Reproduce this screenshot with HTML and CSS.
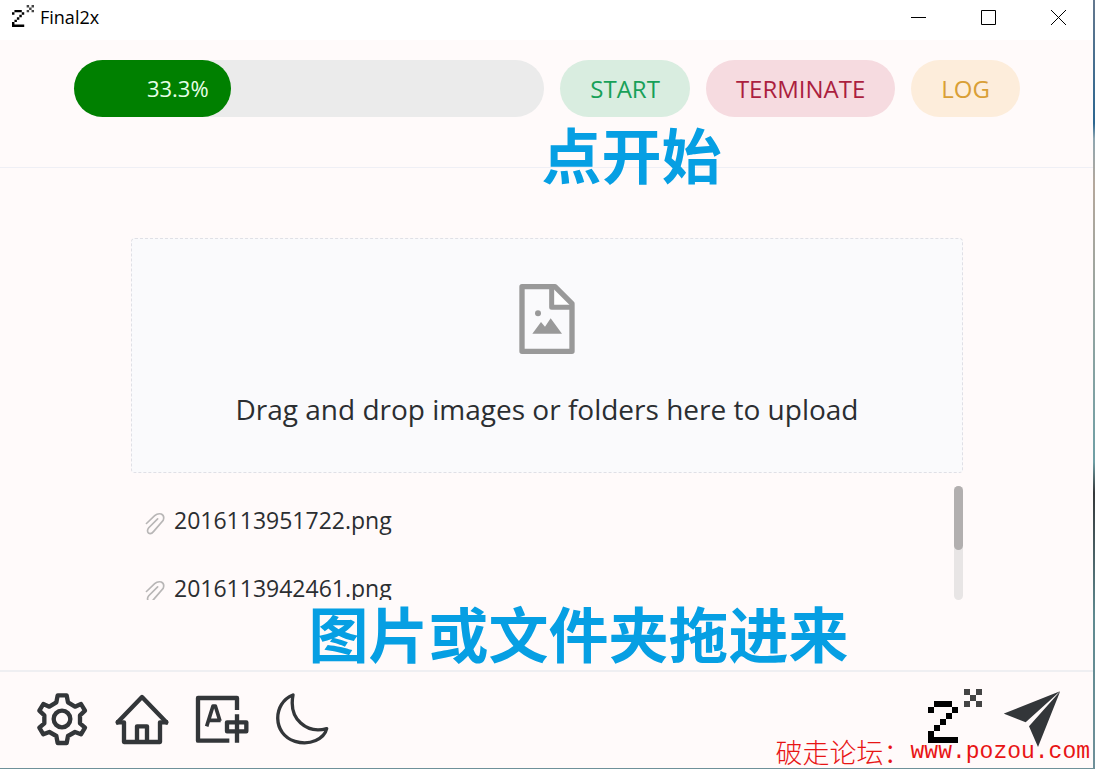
FILE: index.html
```html
<!DOCTYPE html>
<html lang="en">
<head>
  <meta charset="UTF-8" />
  <meta name="viewport" content="width=device-width, initial-scale=1" />
  <title>Final2x</title>
  <link rel="stylesheet" href="styles.css">
</head>
<body>

  <!-- pixel logo, used in the title bar and the footer -->
  <svg class="defs" width="0" height="0" aria-hidden="true">
    <symbol id="logo" viewBox="0 0 9 9">
      <path fill="#000" d="M1 2h3v1h-3zM0 3h1v1h-1zM4 3h1v1h-1zM3 4h1v1h-1zM2 5h1v1h-1zM1 6h1v1h-1zM0 7h1v1h4v1h-5z" />
      <path fill="#444" d="M6 0h1v1h-1zM8 0h1v1h-1zM7 1h1v1h-1zM6 2h1v1h-1zM8 2h1v1h-1z" />
    </symbol>
    <symbol id="clip" viewBox="75 155 60 70">
      <path fill="none" stroke="#b8b6b6" stroke-width="5" stroke-linecap="round" d="M79 190L104 166Q113 158 124 161Q135 166 130 180L101 214Q93 224 85 219Q79 212 86 203L113 176" />
    </symbol>
  </svg>

  <div class="window">
    <div class="titlebar">
      <svg class="title-logo"><use href="#logo" /></svg>
      <span class="title">Final2x</span>
      <div class="controls">
        <button aria-label="Minimize"><svg viewBox="0 0 15 15"><path d="M0 7.5H15" /></svg></button>
        <button aria-label="Maximize"><svg viewBox="0 0 15 15"><path d="M.5 .5H14.5V14.5H.5Z" /></svg></button>
        <button aria-label="Close"><svg viewBox="0 0 15 15"><path d="M0 0L15 15M15 0L0 15" /></svg></button>
      </div>
    </div>

    <header>
      <div class="progress" role="progressbar" aria-valuenow="33.3" aria-valuemin="0" aria-valuemax="100">
        <div class="progress-fill" style="width: 33.3%">33.3%</div>
      </div>
      <button class="pill start">START</button>
      <button class="pill terminate">TERMINATE</button>
      <button class="pill log">LOG</button>
      <div class="note note-start" lang="zh-CN">点开始</div>
    </header>

    <main>
      <button class="dropzone">
        <svg class="file-icon" viewBox="177 162 168 210">
          <path fill="#fff" d="M275 170H287L336 221V232H275Z" />
          <path fill="none" stroke="#999" stroke-width="16" stroke-linejoin="round" d="M186 170H285L336 221V364H186Z" />
          <path fill="none" stroke="#999" stroke-width="15" stroke-linejoin="round" d="M275 170V232H336" />
          <circle cx="234" cy="250" r="9" fill="#999" />
          <path fill="#999" d="M217 311L243 276L255 290L272 265L306 311Z" />
        </svg>
        <span>Drag and drop images or folders here to upload</span>
      </button>

      <div class="files">
        <ul>
          <li><svg><use href="#clip" /></svg>2016113951722.png</li>
          <li><svg><use href="#clip" /></svg>2016113942461.png</li>
        </ul>
        <div class="scrollbar"><div class="thumb"></div></div>
      </div>
      <div class="note note-drop" lang="zh-CN">图片或文件夹拖进来</div>
    </main>

    <footer>
      <button class="tool" aria-label="Settings">
        <svg viewBox="44 62 162 162">
          <path d="M112 72H139L143 93L164 106L182 98L194 118L179 132V156L194 169L182 189L164 182L143 194L139 215H112L108 194L87 182L69 189L57 169L72 156V132L57 118L69 98L87 106L108 93Z" />
          <circle cx="125" cy="143" r="25" />
        </svg>
      </button>
      <button class="tool" aria-label="Home">
        <svg viewBox="285 62 162 162">
          <path d="M293 153L366 77L439 153" stroke-linecap="round" />
          <path d="M288 153H312V212H420V153H444" />
          <path d="M351 212V165H381V212" />
        </svg>
      </button>
      <button class="tool" aria-label="Language">
        <svg viewBox="45 62 162 162">
          <path d="M171 116V80H54V208H148" />
          <path stroke-width="11" d="M80 165L99 104H106L120 149M86 147H122" />
          <path stroke-width="13" d="M141 153H199V180H141ZM171 129V214" />
        </svg>
      </button>
      <button class="tool" aria-label="Dark mode">
        <svg viewBox="284 62 162 162">
          <path stroke-width="10" d="M338 71C276 95 276 190 344 210C390 224 432 202 439 172C380 188 324 145 338 71Z" />
        </svg>
      </button>
      <svg class="footer-logo"><use href="#logo" /></svg>
      <button class="send" aria-label="Send">
        <svg viewBox="311 60 168 168">
          <path d="M310 128L480 60L376 154ZM480 60L413 228L386 166Z" />
        </svg>
      </button>
    </footer>
  </div>

  <div class="watermark" lang="zh-CN">破走论坛：<span>www.pozou.com</span></div>

</body>
</html>
```
FILE: styles.css
```css
* {
  box-sizing: border-box;
}

body {
  margin: 0;
  padding: 0 2px 2px 0;
  min-height: 100vh;
  display: flex;
  position: relative;
  font-family: "Open Sans", "Noto Sans CJK SC", sans-serif;
  color: #2b2e31;
  background: linear-gradient(#64788e, #2c6690 16%, #8fa6b0 18%, #b5a89c 24%, #6f9fa5 60%, #35383a 64%, #5f8a90 80%, #6f9099);
}

.defs {
  position: absolute;
}

button {
  font: inherit;
  color: inherit;
  border: none;
  background: none;
  padding: 0;
  cursor: pointer;
}

svg {
  display: block;
}

.window {
  flex: 1;
  display: flex;
  flex-direction: column;
  background: #fffafa;
}

.titlebar {
  height: 40px;
  display: flex;
  align-items: flex-start;
  padding: 5px 20px 5px 12px;
  background: #fff;
}

.title-logo {
  width: 22px;
  height: 22px;
}

.title {
  margin-left: 6px;
  font-size: 18px;
  line-height: 24px;
  color: #000;
}

.controls {
  margin-left: auto;
  display: flex;
  gap: 40px;
}

.controls button {
  width: 30px;
  height: 24px;
  display: grid;
  place-items: center;
}

.controls svg {
  width: 15px;
  height: 15px;
  fill: none;
  stroke: #000;
}

header {
  position: relative;
  display: flex;
  gap: 16px;
  padding: 20px 73px 50px 74px;
  border-bottom: 1px solid #efeff5;
}

.progress {
  flex: 1;
  height: 57px;
  border-radius: 29px;
  background: #ebebeb;
}

.progress-fill {
  height: 57px;
  padding-right: 22px;
  border-radius: 29px;
  background: #008000;
  color: #e6ffe6;
  font-size: 22px;
  line-height: 56px;
  text-align: right;
}

.pill {
  height: 57px;
  padding: 0 30px;
  border-radius: 29px;
  font-size: 24px;
  line-height: 56px;
}

.start {
  background: #d9ede0;
  color: #18a058;
}

.terminate {
  background: #f6dbe0;
  color: #ab1f3f;
}

.log {
  background: #fdeddb;
  color: #d99f36;
}

.note {
  position: absolute;
  font-family: "Noto Sans CJK SC", sans-serif;
  font-weight: 700;
  font-size: 60px;
  line-height: 60px;
  white-space: nowrap;
  color: #069fe3;
}

.note-start {
  left: calc(50% - 5px);
  top: 83px;
}

.note-drop {
  left: calc(50% - 238px);
  bottom: 8px;
}

main {
  position: relative;
  flex: 1;
  padding: 70px 130px 70px 131px;
}

.dropzone {
  width: 100%;
  padding: 45px 20px 43px;
  display: flex;
  flex-direction: column;
  align-items: center;
  gap: 35px;
  border: 1px dashed #e0e0e6;
  border-radius: 4px;
  background: #fafafc;
  font-size: 28px;
  line-height: 40px;
}

.file-icon {
  width: 56px;
  height: 70px;
}

.files {
  display: flex;
  height: 114px;
  margin-top: 13px;
  overflow: hidden;
}

.files ul {
  flex: 1;
  margin: 0;
  padding: 0 0 0 14px;
  list-style: none;
}

.files li {
  display: flex;
  align-items: center;
  gap: 9px;
  font-size: 23px;
  line-height: 68px;
}

.files svg {
  width: 20px;
  height: 23px;
  margin-top: 6px;
}

.scrollbar {
  width: 9px;
  border-radius: 5px;
  background: #e8e5e5;
}

.thumb {
  height: 64px;
  border-radius: 5px;
  background: #b2afaf;
}

footer {
  display: flex;
  align-items: center;
  gap: 26px;
  padding: 19px 33px 21px 35px;
  border-top: 2px solid #efeff2;
}

.tool svg {
  width: 54px;
  height: 54px;
  fill: none;
  stroke: #333639;
  stroke-width: 13;
  stroke-linejoin: round;
}

.footer-logo {
  width: 54px;
  height: 54px;
  margin: -6px -4px 0 auto;
}

.send svg {
  width: 56px;
  height: 56px;
  fill: #333639;
}

.watermark {
  position: absolute;
  right: 5px;
  bottom: 2px;
  display: flex;
  font-family: "Noto Sans CJK SC", sans-serif;
  font-weight: 300;
  font-size: 27px;
  line-height: 32px;
  color: #e81414;
}

.watermark span {
  font-family: "Liberation Mono", monospace;
  font-size: 23px;
}
```
